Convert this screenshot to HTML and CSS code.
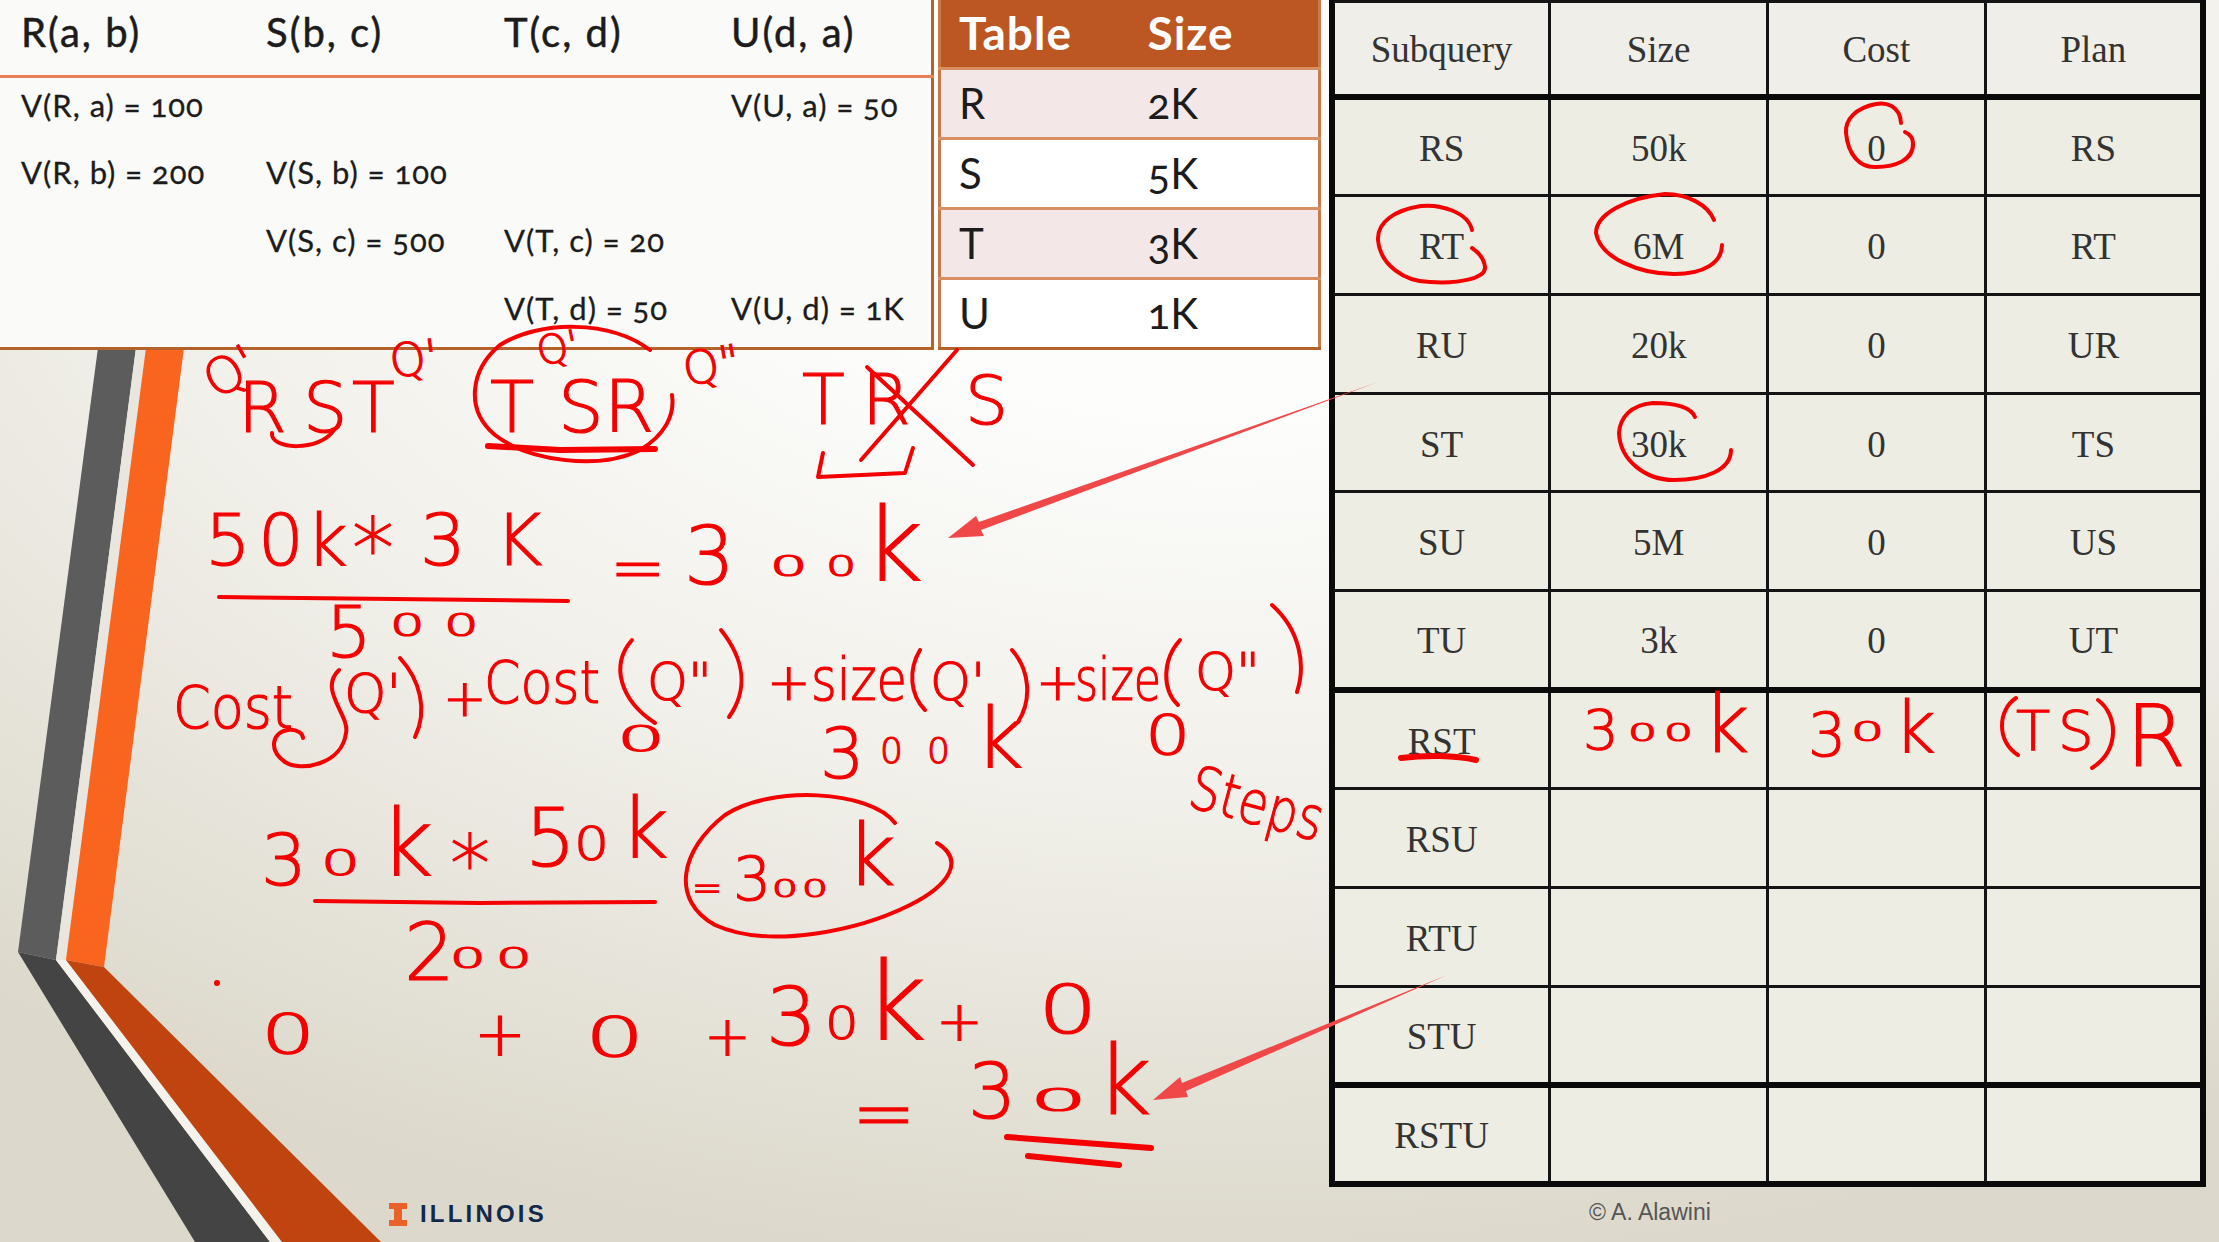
FILE: index.html
```html
<!DOCTYPE html>
<html lang="en">
<head>
    <meta charset="UTF-8">
    <title>Join order: dynamic programming</title>
    <link rel="stylesheet" href="styles.css">
</head>
<body>
    <div class="slide">
        <!-- slide theme chevron -->
        <svg class="chevron" viewBox="0 0 2219 1242" aria-hidden="true">
            <polygon points="137,340 56,960 18,952 99,340" fill="#5c5c5c"/>
            <polygon points="137,340 147,340 66,960 56,960" fill="#e8e6de"/>
            <polygon points="18,952 56,960 270,1242 195,1242" fill="#444"/>
            <polygon points="56,960 66,960 282,1242 270,1242" fill="#f4f2ea"/>
            <polygon points="147,340 185,340 104,967 66,960" fill="#f9651e"/>
            <polygon points="66,960 104,967 381,1242 282,1242" fill="#c0440f"/>
        </svg>

        <div class="left-col">
            <div class="top-tables">
                <table class="values">
                    <tr><th>R(a, b)</th><th>S(b, c)</th><th>T(c, d)</th><th>U(d, a)</th></tr>
                    <tr><td>V(R, a) = 100</td><td></td><td></td><td>V(U, a) = 50</td></tr>
                    <tr><td>V(R, b) = 200</td><td>V(S, b) = 100</td><td></td><td></td></tr>
                    <tr><td></td><td>V(S, c) = 500</td><td>V(T, c) = 20</td><td></td></tr>
                    <tr><td></td><td></td><td>V(T, d) = 50</td><td>V(U, d) = 1K</td></tr>
                </table>
                <table class="sizes">
                    <tr><th>Table</th><th>Size</th></tr>
                    <tr class="odd"><td>R</td><td>2K</td></tr>
                    <tr><td>S</td><td>5K</td></tr>
                    <tr class="odd"><td>T</td><td>3K</td></tr>
                    <tr><td>U</td><td>1K</td></tr>
                </table>
            </div>
            <div class="logo">
                <svg class="logo-i" viewBox="0 0 18 23">
                    <polygon points="0,0 18,0 18,6 13,6 13,17 18,17 18,23 0,23 0,17 5,17 5,6 0,6" fill="#e8622a"/>
                </svg>
                <span class="logo-name">ILLINOIS</span>
            </div>
        </div>

        <div class="right-col">
            <table class="dp">
                <tr class="head"><td>Subquery</td><td>Size</td><td>Cost</td><td>Plan</td></tr>
                <tr><td>RS</td><td>50k</td><td>0</td><td>RS</td></tr>
                <tr><td>RT</td><td>6M</td><td>0</td><td>RT</td></tr>
                <tr><td>RU</td><td>20k</td><td>0</td><td>UR</td></tr>
                <tr><td>ST</td><td>30k</td><td>0</td><td>TS</td></tr>
                <tr><td>SU</td><td>5M</td><td>0</td><td>US</td></tr>
                <tr class="sep"><td>TU</td><td>3k</td><td>0</td><td>UT</td></tr>
                <tr><td>RST</td><td></td><td></td><td></td></tr>
                <tr><td>RSU</td><td></td><td></td><td></td></tr>
                <tr><td>RTU</td><td></td><td></td><td></td></tr>
                <tr class="sep"><td>STU</td><td></td><td></td><td></td></tr>
                <tr><td>RSTU</td><td></td><td></td><td></td></tr>
            </table>
            <div class="credit">© A. Alawini</div>
        </div>

        <!-- pen annotations on top of the slide -->
        <svg class="ink" viewBox="0 0 2219 1242">
            <!-- join orders -->
            <text class="hand" font-size="50" transform="translate(216 400) rotate(-30)">Q'</text>
            <text class="hand" font-size="70" x="238 303 352" y="432">RST</text>
            <text class="hand" font-size="46" transform="translate(392 378) rotate(-8)">Q'</text>
            <text class="hand" font-size="72" x="490 558 604" y="432">TSR</text>
            <text class="hand" font-size="40" transform="translate(540 366) rotate(-12)">Q'</text>
            <text class="hand" font-size="46" transform="translate(686 386) rotate(-10)">Q"</text>
            <text class="hand" font-size="70" x="802 862" y="424">TR</text>
            <text class="hand" font-size="68" x="965" y="424">S</text>
            <path class="pen" d="M272 433C270 450 320 452 334 430"/>
            <path class="pen" d="M650 350C610 320 540 320 500 345C470 370 465 410 495 435C530 462 600 470 640 450C665 435 675 415 672 395"/>
            <path class="pen thick" d="M488 446L560 450L655 449"/>
            <path class="pen" d="M823 453L818 477L905 473L913 448"/>
            <path class="pen" d="M957 350L861 460M867 367L973 465"/>

            <!-- size of RST -->
            <text class="hand" font-size="72" x="205 258 306" y="565">50k</text>
            <text class="hand" font-size="84" x="352" y="578">*</text>
            <text class="hand" font-size="72" x="420 495" y="565">3K</text>
            <path class="pen" d="M219 597L568 601"/>
            <text class="hand" font-size="72" x="326" y="657">5</text>
            <text class="hand" font-size="32" transform="translate(390 636) scale(1.7 1)">0</text>
            <text class="hand" font-size="32" transform="translate(444 636) scale(1.7 1)">0</text>
            <text class="hand" font-size="66" x="610" y="590">=</text>
            <text class="hand" font-size="80" x="684" y="584">3</text>
            <text class="hand" font-size="28" transform="translate(770 576) scale(2.1 1)">0</text>
            <text class="hand" font-size="28" transform="translate(826 576) scale(1.7 1)">0</text>
            <text class="hand" font-size="102" x="864" y="580">k</text>

            <!-- cost formula -->
            <text class="hand" font-size="58" x="173" y="728" textLength="120" lengthAdjust="spacingAndGlyphs">Cost</text>
            <path class="pen" d="M339 670C318 690 350 715 346 733C342 765 300 772 285 762C268 750 272 732 288 730C298 729 303 734 303 738"/>
            <text class="hand" font-size="54" x="344" y="712">Q'</text>
            <path class="pen" d="M400 658C420 680 428 710 415 737"/>
            <text class="hand" font-size="52" x="443" y="716">+</text>
            <text class="hand" font-size="58" x="484" y="703" textLength="116" lengthAdjust="spacingAndGlyphs">Cost</text>
            <path class="pen" d="M632 640C610 665 620 700 655 723"/>
            <text class="hand" font-size="52" x="647" y="700">Q"</text>
            <path class="pen" d="M721 630C745 660 748 690 729 717"/>
            <text class="hand" font-size="36" transform="translate(617 751) scale(2.1 1)">0</text>
            <text class="hand" font-size="52" x="767" y="700">+</text>
            <text class="hand" font-size="58" x="811" y="700" textLength="96" lengthAdjust="spacingAndGlyphs">size</text>
            <path class="pen" d="M920 650C908 670 910 695 925 710"/>
            <text class="hand" font-size="52" x="930" y="700">Q'</text>
            <path class="pen" d="M1012 650C1030 670 1032 700 1018 722"/>
            <text class="hand" font-size="52" x="1036" y="700">+</text>
            <text class="hand" font-size="58" x="1075" y="700" textLength="86" lengthAdjust="spacingAndGlyphs">size</text>
            <path class="pen" d="M1180 640C1162 660 1162 690 1178 705"/>
            <text class="hand" font-size="52" x="1195" y="690">Q"</text>
            <path class="pen" d="M1272 605C1300 630 1306 665 1297 692"/>
            <text class="hand" font-size="70" x="820" y="778">3</text>
            <text class="hand" font-size="36" x="880 927" y="763">00</text>
            <text class="hand" font-size="84" x="975" y="768">k</text>
            <text class="hand" font-size="55" transform="translate(1145 754) scale(1.3 1)">0</text>
            <text class="hand" font-size="60" transform="translate(1186 806) rotate(15)" textLength="136" lengthAdjust="spacingAndGlyphs">Steps</text>

            <!-- size of (TS)R -->
            <text class="hand" font-size="72" x="261" y="885">3</text>
            <text class="hand" font-size="36" transform="translate(321 875) scale(1.7 1)">0</text>
            <text class="hand" font-size="92" x="380" y="876">k</text>
            <text class="hand" font-size="80" x="450" y="892">*</text>
            <text class="hand" font-size="80" x="525" y="866">5</text>
            <text class="hand" font-size="46" transform="translate(574 860) scale(1.2 1)">0</text>
            <text class="hand" font-size="84" x="620" y="858">k</text>
            <path class="pen" d="M315 901L480 903L655 902"/>
            <text class="hand" font-size="80" x="404" y="980">2</text>
            <text class="hand" font-size="28" transform="translate(450 968) scale(2 1)">0</text>
            <text class="hand" font-size="28" transform="translate(496 968) scale(2 1)">0</text>
            <path class="pen" d="M895 823C870 790 770 785 725 815C680 850 670 900 715 925C770 950 860 930 910 905C950 885 965 860 937 843"/>
            <text class="hand" font-size="36" x="692" y="900">=</text>
            <text class="hand" font-size="60" x="733" y="900">3</text>
            <text class="hand" font-size="24" transform="translate(772 897) scale(1.7 1)">0</text>
            <text class="hand" font-size="24" transform="translate(802 897) scale(1.7 1)">0</text>
            <text class="hand" font-size="86" x="846" y="885">k</text>

            <!-- total cost -->
            <circle class="dot" cx="217" cy="983" r="3"/>
            <text class="hand" font-size="55" transform="translate(261 1053) scale(1.55 1)">0</text>
            <text class="hand" font-size="62" x="474" y="1055">+</text>
            <text class="hand" font-size="55" transform="translate(585 1056) scale(1.7 1)">0</text>
            <text class="hand" font-size="56" x="704" y="1055">+</text>
            <text class="hand" font-size="80" x="766" y="1045">3</text>
            <text class="hand" font-size="44" transform="translate(825 1039) scale(1.2 1)">0</text>
            <text class="hand" font-size="108" x="864" y="1040">k</text>
            <text class="hand" font-size="56" x="936" y="1040">+</text>
            <text class="hand" font-size="67" transform="translate(1038 1033) scale(1.4 1)">0</text>
            <text class="hand" font-size="76" x="852" y="1140">=</text>
            <text class="hand" font-size="76" x="968" y="1118">3</text>
            <text class="hand" font-size="32" transform="translate(1030 1111) scale(2.8 1)">0</text>
            <text class="hand" font-size="96" x="1096" y="1114">k</text>
            <path class="pen thick" d="M1007 1137L1151 1148M1028 1156L1119 1165"/>

            <!-- pointers from the table to the working -->
            <polygon class="arrow" points="1378,382 979,522 976,516 948,538 984,536 981,530"/>
            <polygon class="arrow" points="1447,975 1182,1083 1180,1077 1153,1100 1188,1097 1186,1091"/>

            <!-- marks on the table -->
            <path class="pen" d="M1901 123C1900 105 1885 102 1876 104C1855 108 1845 120 1846 133C1848 155 1860 168 1876 167C1895 167 1914 160 1913 143C1913 138 1909 134 1905 132"/>
            <path class="pen" d="M1472 230C1468 212 1440 204 1421 206C1395 210 1377 222 1378 240C1380 265 1405 282 1430 282C1460 284 1486 278 1485 267C1484 258 1478 252 1472 248"/>
            <path class="pen" d="M1714 220C1708 205 1688 194 1665 194C1625 198 1596 215 1596 233C1600 258 1640 274 1674 274C1705 274 1722 262 1722 245"/>
            <path class="pen" d="M1695 417C1690 405 1670 403 1653 403C1630 405 1620 418 1619 433C1620 460 1645 480 1674 480C1705 480 1731 470 1731 450"/>
            <path class="pen thick" d="M1401 758C1425 755 1455 755 1476 760"/>
            <text class="hand" font-size="56" x="1583" y="749">3</text>
            <text class="hand" font-size="24" transform="translate(1628 741) scale(1.9 1)">0</text>
            <text class="hand" font-size="24" transform="translate(1664 741) scale(1.9 1)">0</text>
            <text class="hand" font-size="80" x="1703" y="752">k</text>
            <text class="hand" font-size="60" x="1808" y="756">3</text>
            <text class="hand" font-size="26" transform="translate(1851 741) scale(2 1)">0</text>
            <text class="hand" font-size="72" x="1894" y="752">k</text>
            <path class="pen" d="M2016 698C1998 710 1996 740 2018 755"/>
            <text class="hand" font-size="56" x="2016 2058" y="750">TS</text>
            <path class="pen" d="M2098 700C2118 715 2120 750 2092 768"/>
            <text class="hand" font-size="86" x="2126" y="766">R</text>
        </svg>
    </div>
</body>
</html>
```

FILE: styles.css
```css
* {
    margin: 0;
    padding: 0;
    box-sizing: border-box;
}

body {
    width: 2219px;
    height: 1242px;
    overflow: hidden;
}

.slide {
    position: relative;
    display: flex;
    width: 2219px;
    height: 1242px;
    background: radial-gradient(ellipse 1900px 1150px at 55% 10%, #fdfdfc 25%, #f1f0ea 58%, #dcd8cb 100%);
}

.chevron,
.ink {
    position: absolute;
    top: 0;
    left: 0;
    width: 2219px;
    height: 1242px;
}

.ink {
    pointer-events: none;
}

/* left side: two tables and the logo */
.left-col {
    position: relative;
    display: flex;
    flex-direction: column;
    width: 1321px;
    height: 100%;
}

.top-tables {
    display: flex;
    gap: 4px;
    align-items: flex-start;
}

table {
    border-collapse: collapse;
    table-layout: fixed;
}

.values {
    width: 934px;
    height: 350px;
    background: #fafaf8;
    border-bottom: 3px solid #b5622a;
    border-right: 3px solid #b5622a;
    font-family: "Lato", sans-serif;
    color: #1c1c1c;
    text-align: left;
    font-feature-settings: "onum";
}

.values th,
.values td {
    padding-left: 21px;
    white-space: nowrap;
}

.values th:first-child,
.values td:first-child {
    width: 245px;
}

.values th:nth-child(2),
.values td:nth-child(2) {
    width: 238px;
}

.values th:nth-child(3),
.values td:nth-child(3) {
    width: 227px;
}

.values th {
    height: 76px;
    padding-bottom: 10px;
    font-size: 40px;
    font-weight: 400;
    letter-spacing: 2px;
    -webkit-text-stroke: 0.5px #1c1c1c;
    border-bottom: 3px solid #ea8058;
}

.values td {
    height: 68px;
    padding-bottom: 12px;
    font-size: 31px;
    letter-spacing: 1px;
    -webkit-text-stroke: 0.3px #1c1c1c;
}

.sizes {
    width: 383px;
    height: 350px;
    font-family: "Lato", sans-serif;
    color: #1c1c1c;
    border-bottom: 3px solid #b5622a;
    border-left: 3px solid #c97a4a;
    border-right: 3px solid #c97a4a;
    background: #fff;
    font-feature-settings: "onum";
}

.sizes th,
.sizes td {
    text-align: left;
    padding-left: 18px;
}

.sizes th:first-child,
.sizes td:first-child {
    width: 190px;
}

.sizes th {
    height: 68px;
    padding-bottom: 2px;
    background: #bc5623;
    color: #fff;
    font-size: 46px;
    font-weight: 700;
    letter-spacing: 1px;
}

.sizes td {
    height: 70px;
    font-size: 42px;
    border-top: 3px solid #d88f62;
}

.sizes .odd td {
    background: #f3e8e7;
}

.logo {
    display: flex;
    align-items: center;
    gap: 13px;
    margin-top: auto;
    margin-bottom: 14px;
    margin-left: 389px;
}

.logo-i {
    width: 18px;
    height: 23px;
}

.logo-name {
    font-family: "Liberation Sans", sans-serif;
    font-size: 24px;
    font-weight: 700;
    letter-spacing: 3.2px;
    color: #13294b;
}

/* right side: dynamic programming table */
.right-col {
    position: relative;
    margin-left: 8px;
    width: 877px;
}

.dp {
    width: 877px;
    height: 1187px;
    background: #eeede4;
    border-left: 6px solid #0a0a0a;
    border-right: 6px solid #0a0a0a;
    border-bottom: 6px solid #0a0a0a;
    border-top: 3px solid #0a0a0a;
    font-family: "Liberation Serif", serif;
    font-size: 37px;
    color: #333;
    text-align: center;
}

.dp td {
    height: 98.8px;
    padding-top: 3px;
    border: 3px solid #141414;
}

.dp .head td {
    height: 95px;
    background: #efeee8;
    border-bottom: 6px solid #0a0a0a;
}

.dp .sep td {
    border-bottom: 6px solid #0a0a0a;
}

.credit {
    margin-top: 12px;
    margin-left: 260px;
    font-family: "Liberation Sans", sans-serif;
    font-size: 23px;
    color: #555;
}

/* pen strokes */
.pen {
    fill: none;
    stroke: #f50000;
    stroke-width: 4;
    stroke-linecap: round;
    stroke-linejoin: round;
}

.thick {
    stroke-width: 6;
}

.hand {
    font-family: "DejaVu Sans", sans-serif;
    font-weight: 200;
    fill: #f50000;
    stroke: #f50000;
    stroke-width: 1.2;
}

.dot {
    fill: #f50000;
}

.arrow {
    fill: #f04848;
}
```
